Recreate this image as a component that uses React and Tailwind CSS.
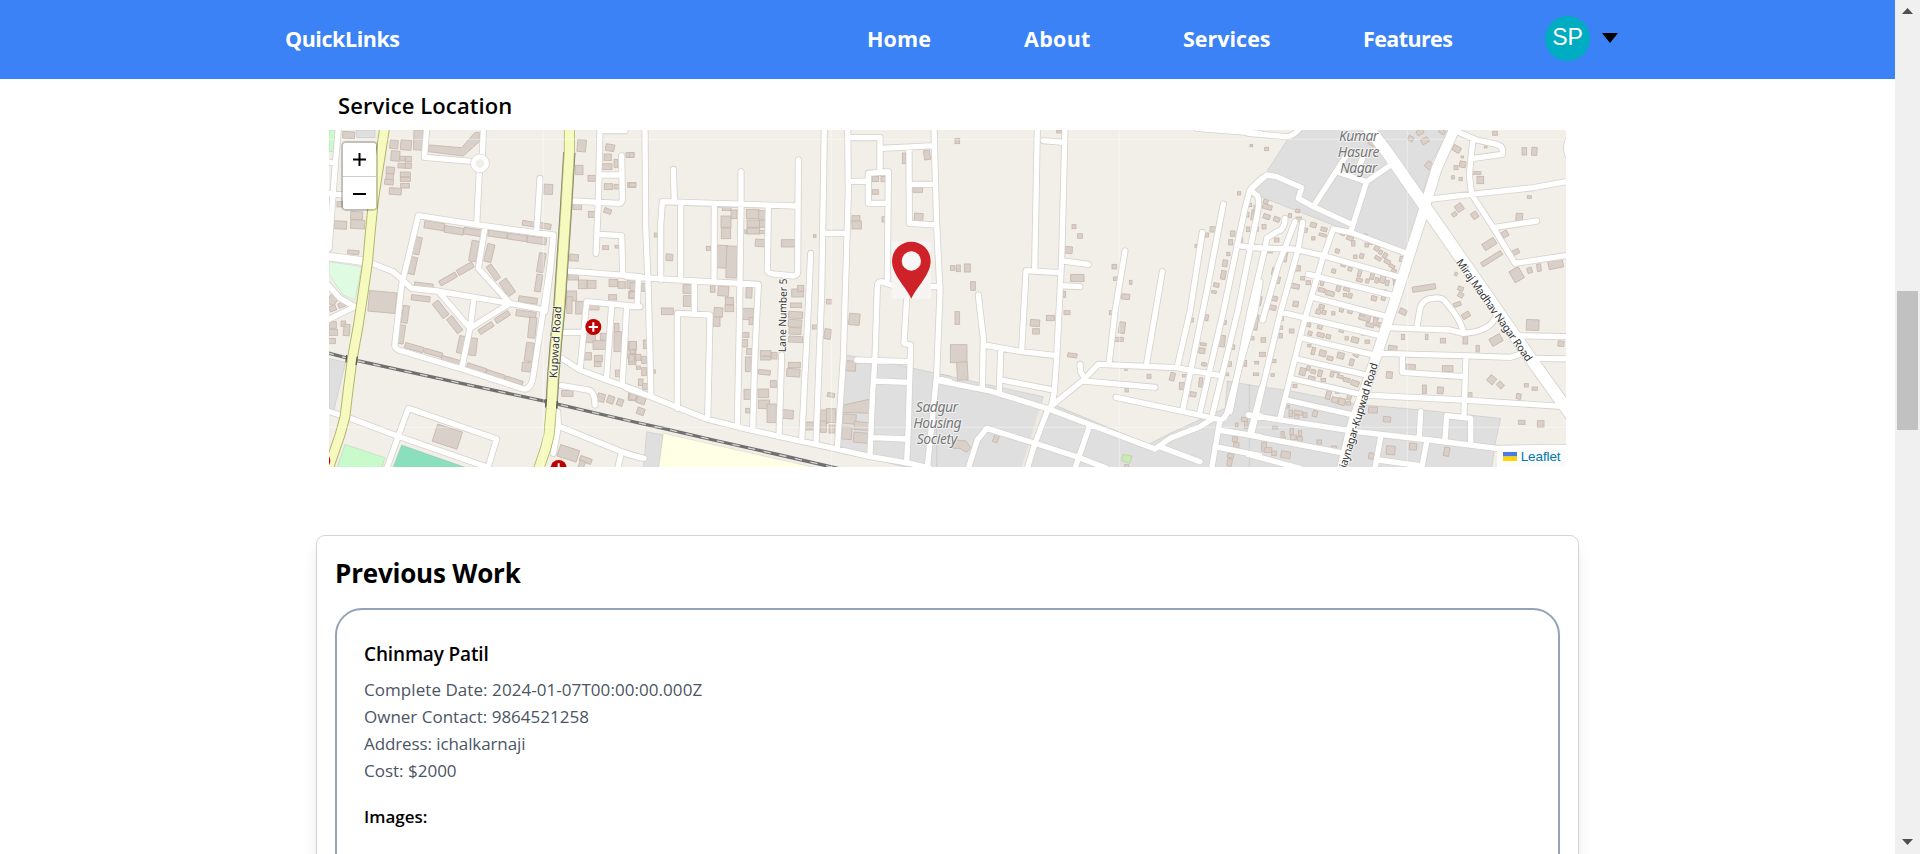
import React from "react";

const parse = (s) => s.trim().split(";").map((r) => r.trim()).filter(Boolean).map((r) => r.split(/[\s,]+/).map(Number));

// Each sector holds its own local coordinates, shifted by dx on the map canvas.
// Building entries: centre x, centre y, width, height, rotation.
const SECTORS = [
  {
    dx: 0,
    areas: [
      ["#c8facc", "27,15 48,15 40,80 27,80"],
      ["#dffce2", "27,410 125,425 105,525 70,510 45,475 27,445"],
      ["#dfdfdf", "108,15 165,15 165,38 110,38"],
      ["#dfdfdf", "27,700 77,712 42,855 27,850"],
      ["#c8facc", "75,958 195,998 185,1030 50,1030"],
      ["#8adfbc", "245,960 445,1030 218,1030"],
    ],
    roads: `M155 415L220 440L275 490L350 498L570 535L660 552 M20 475L60 520L105 545L20 586 M55 10L45 130L27 370 M20 110L45 115 M20 205L70 210
      M320 10L313 97L465 110 M490 10L487 90 M478 140L470 300 M295 272L475 300L700 330L690 425L640 750Q634 795 610 792L420 730L235 675Q222 668 225 655L245 480Z
      M660 160L650 320 M495 305L475 430L570 535L450 610L425 730 M360 505L450 610 M462 520L450 610 M20 857L90 880L230 932L500 1026 M200 1030L265 850L530 942L503 1030
      M840 10L835 230L828 385 M915 17L850 17 M905 92L907 225Q905 235 895 235L758 228 M840 150L905 150 M835 328L905 332L908 445 M742 438L960 455
      M960 545L800 530L780 735 M735 622L790 622 M875 540L860 755 M920 545L907 775 M725 700L780 735L860 765L960 800 M725 782L805 795Q825 800 825 840
      M713 860L715 905L700 985 M720 905L905 980L960 998 M905 980L893 1030 M700 340L692 430L675 560`,
    wide: "M20 394L135 409",
    buildings: `86 30 36 20 3;295 45 28 60 2;222 58 24 26 5;258 60 32 30 5;226 93 26 30 5;245 122 22 14 3;248 101 16 14 3;265 102 18 16 0;265 122 18 16 0;211 136 24 20 5;209 155 22 18 5;207 171 26 16 5;256 148 30 14;256 163 30 12;255 182 26 14;226 199 36 20 4;
      61 300 38 24 3;110 272 36 24 3;113 298 42 26 3;100 382 34 12 5;60 238 18 16;785 62 26 36 5;685 193 26 30 3;778 135 22 28;815 160 22 18;772 245 26 18;815 268 20 18;762 398 26 20 4;865 185 24 18;890 185 16 14;935 180 24 14;930 90 24 14;870 68 26 20 10;863 97 22 20;862 125 28 18;888 115 12 24;863 258 22 14 20;857 368 18 12;891 365 12 8;760 457 32 16;
      343 302 60 22 9;402 316 58 20 9;458 321 54 20 9;533 328 58 18 8;592 337 58 18 8;650 346 58 20 8;625 296 36 14 10;675 303 36 16 10;291 362 22 52 12;278 422 20 52 12;311 482 56 16 7;302 520 56 16 7;462 378 22 62 10;508 384 22 54 14;436 431 52 18 -30;384 462 56 16 -30;520 442 18 50 -35;562 487 26 50 -35;664 413 20 58 9;656 474 18 52 9;624 525 56 18 8;618 567 60 18 8;637 608 22 62 6;362 553 22 54 -38;404 599 20 54 -38;547 576 48 16 -33;498 609 48 16 -33;424 659 20 52 12;459 665 22 52 6;628 681 24 56 8;620 726 28 28 5;256 568 18 52 8;244 628 18 56 8;283 668 58 16 16;341 684 54 14 16;393 706 58 14 16;470 730 60 16 18;527 749 58 14 18;583 767 52 12 18;
      187 531 82 62 5;382 935 78 54 18;38 525 24 30 30;38 600 22 20;40 622 26 18;36 648 20 16;70 596 14 16;80 615 18 34 5;38 550 20 16 -20;65 540 20 14 -20;788 478 26 26;815 478 26 24;755 513 30 30;748 540 16 50;780 548 26 38;822 547 30 16;880 474 26 22;905 480 22 20;878 517 24 16;932 478 22 24;937 510 22 22;850 635 18 20;812 640 28 26;838 660 38 26;890 610 14 30;893 650 22 60;803 694 22 22;835 700 24 18;833 718 20 14;937 660 24 20;935 685 26 28;937 710 22 18;893 745 14 20;742 805 34 18;843 818 22 24 15;872 824 20 22 20;900 832 18 20 20;938 815 26 24 5;745 985 60 36 18;797 1005 36 16 20;785 1020 16 26 20`,
    shapes: ["328,60 425,68 465,22 478,22 478,50 430,93 325,80"],
  },
  {
    dx: 930,
    areas: [
      ["#dfdfdf", "648,690 760,710 920,745 962,753 962,1030 840,1030 620,975 635,850"],
      ["#dfdfdf", "50,920 100,930 90,1030 40,1030"],
      ["#ffffe5", "100,925 600,1038 85,1038"],
    ],
    roads: `M45 10L47 300L55 500L63 815 M-10 790L63 815L145 848L230 882L340 910L450 935L620 972L720 995L840 1015L900 1030
      M92 465L92 300L97 230L500 243 M130 133L133 228 M333 140L333 240L328 600L322 905 M152 235L152 465 M253 238L252 467 M505 105L503 440Q502 453 490 453L430 447Q412 444 412 435L415 245
      M-10 455L195 468L385 478L375 680L368 915 M193 470L193 565 M142 850L142 565L240 570L233 880 M25 462L22 545L-10 545 M455 690L447 935 M542 385L530 650L515 945
      M583 10L575 500L558 955 M653 10L655 200L640 700L622 970 M655 38L750 38L750 140 M755 70L912 62 M655 170L712 168 M775 235L715 235L715 145L775 140L772 465 M720 990L728 800L735 700L742 485Q742 470 755 470L800 485 M585 325L650 325
      M837 70L838 295L920 300 M845 178L915 178 M912 10L920 300L930 500L920 750L892 1030 M900 485L930 485 M830 520L822 655L842 660L835 900L830 1015 M680 705L840 710 M735 768L835 772 M730 938L830 942 M-10 987L42 1000 M920 760L960 770`,
    buildings: `5 90 14 14;8 180 20 12;78 330 10 12;118 397 20 20 5;236 370 14 12;290 250 26 14;312 268 18 26;288 290 30 34;288 325 28 32;276 395 32 68 2;305 411 32 95 2;368 267 38 28;397 270 22 26;370 296 38 22;398 297 20 20;370 318 38 18;345 320 10 10;398 321 20 10;392 354 32 22 3;474 355 40 22;554 333 8 8;172 492 26 26;172 528 24 32;248 492 14 20;280 498 32 30 5;357 503 18 32 3;298 528 24 22;298 550 26 20;265 562 26 28 5;260 590 20 28;112 559 36 20;353 567 34 34;363 588 12 22;503 504 36 24;512 490 18 18;498 541 34 14;497 570 42 20 3;495 595 40 22 3;495 618 36 20 3;497 643 42 18 3;597 530 16 14;593 627 20 30 10;555 606 16 12;673 583 32 34 5;347 630 20 14;345 655 16 22;358 680 16 18;355 718 18 44;407 685 32 16;407 700 30 10;433 692 16 20;403 742 36 14 6;493 720 36 16;490 743 40 24 4;430 777 18 20;352 808 20 30;400 805 32 26;402 838 34 26;425 865 28 56;473 868 34 26 5;353 857 12 14;603 810 22 12 10;538 903 24 24;582 875 22 40;603 872 28 42;580 905 18 34;606 912 18 24;658 882 40 28 5;694 903 42 24 5;650 925 30 36 5;692 938 42 30 5;662 723 30 30 4;736 162 20 16;760 162 14 16;736 201 18 14;678 282 24 20;680 300 28 24;762 283 12 16;822 100 10 32;891 90 18 28 -8;863 195 30 14;866 276 26 22 4;8 485 16 24;6 510 16 18;40 487 12 24;8 662 22 26;25 697 16 18;5 700 16 22;8 680 14 12;45 658 10 26;42 705 14 22;25 728 12 10;42 740 14 24;73 740 6 10;32 772 14 20;45 785 14 18;8 815 20 18 20;33 826 26 20 20;32 859 22 20 20`,
    shapes: ["640,840 718,823 718,865 638,862"],
  },
  {
    dx: 1860,
    areas: [
      ["#dfdfdf", "-10,745 310,815 300,850 325,850 340,835 345,840 625,958 700,920 855,850 862,768 932,780 932,1030 -10,1030"],
      ["#c8ebb0", "548,988 576,993 570,1015 545,1008"],
    ],
    roads: `M-10 766L150 798L320 850L645 972L690 940L780 905L820 880 M292 10L284 435 M310 47L370 52 M375 10L365 400L350 700L343 800L335 840 M360 443L258 437L245 675 M370 408L445 418 M362 482L420 485
      M115 510L130 640L127 790 M133 660L245 680L350 692 M182 680L178 805 M185 765L340 795 M555 378L525 560L507 715 M667 440L620 715 M840 752L710 728L475 718L430 765L325 850 M420 718L422 740L435 762 M430 768L645 787 M528 817L730 860L845 885
      M787 322L750 560L712 725 M850 237L800 500L728 855 M965 160L930 195L915 250L850 560L780 860 M930 195L952 212Q962 230 945 300L893 560L818 865 M960 470L945 560L900 720L865 850Q858 882 840 885L815 1030 M890 362L960 368
      M500 1030L410 995L285 955L140 910L112 945L85 1030 M325 850L285 955L262 1030 M448 905L405 1030 M660 965L780 1010 M835 915L960 935 M825 965L960 992 M965 790L930 925 M945 868L960 872 M770 10L960 25`,
    buildings: `52 48 14 16;357 20 14 8;402 305 12 12;420 333 14 14;386 375 22 20 4;412 459 40 22;373 508 8 18;38 429 14 14;55 430 12 20;82 429 18 24;99 483 14 26;52 579 14 38;56 686 50 54;67 738 32 54 -3;285 594 28 20 4;288 619 20 16;331 579 24 16;381 563 18 12;397 691 28 12 8;523 425 14 14;526 461 12 10;572 472 8 12;557 515 24 16 5;513 563 10 12;546 608 18 34 8;537 643 26 12;897 205 10 10;934 62 6 6;818 313 16 16;801 330 10 12;768 363 6 10;878 326 14 16;872 352 12 16;865 387 10 10;855 415 14 20 10;850 450 14 26 10;829 480 16 12 10;822 501 14 8 10;930 240 10 10;921 269 12 14;939 270 10 30 8;924 313 10 14;903 345 10 14;755 585 10 12;800 578 10 18 8;852 592 14 12 8;845 648 20 34 8;790 658 18 8 8;786 677 18 16 8;877 666 14 14 8;792 718 14 10 8;868 717 12 14;916 715 8 18;558 733 8 6;627 754 12 12;697 755 14 24 14;733 752 12 8;726 783 16 20;782 772 10 28 8;860 748 12 8;759 808 18 14 8;560 795 10 12;168 940 14 24 20;913 883 18 12;919 900 10 20;890 900 8 12;885 942 14 16 10;889 960 16 14;872 992 18 12 10;869 1012 14 22 10;560 1023 12 8`,
    shapes: ["35,955 50,945 78,948 92,968 80,982 60,970 40,970"],
  },
  {
    dx: 2790,
    areas: [
      ["#dfdfdf", "115,40 150,10 600,10 545,110 515,220 470,385 300,320 30,215 5,190 50,140"],
      ["#dfdfdf", "-2,780 120,797 325,838 520,855 752,880 735,960 725,1030 -2,1030"],
    ],
    roads: `M-5 25L110 35Q128 35 150 10 M5 190L50 150L80 155L155 188L145 220L190 245L305 298 M290 90L190 245 M260 140L350 170 M425 118L350 170L303 318 M340 95L325 130
      M90 880L165 580L215 410L250 312L300 322L475 387 M-5 368L130 372L220 392L450 457 M175 448L430 512 M190 517L410 575 M95 562L390 632 M160 640L380 692 M145 703L350 750 M130 762L340 810L640 825L948 845 M110 825L310 870 M-5 870L320 920L540 945L740 970L960 967
      M-5 930L285 985 M-5 988L150 1030 M105 280Q105 315 80 320L50 340L45 370L0 560L-60 860 M135 290L85 420L38 585 M158 292L145 370L92 560L5 925
      M615 17L680 45L740 58Q762 64 757 88L670 100 M668 50L658 150L665 208L730 308L795 415L960 390 M545 222L665 208L850 188L960 168 M730 308L860 288 M415 608L600 615L640 625Q715 620 735 580 M500 610L510 550Q520 520 550 520Q578 514 590 535Q630 580 640 620
      M385 685L640 692L780 697L820 685 M790 632L960 635 M850 700L960 702 M457 690L457 742L645 755 M648 695L642 870 M585 945L590 872L662 880L662 960 M512 860L508 935 M393 930L375 1030 M530 950L515 1030 M385 1005L510 1022 M955 45Q945 70 955 95`,
    wide: "M615 8L560 130L525 245L480 385L440 510L400 630L350 780L310 890L275 1035",
    major: "M355 8L410 80L525 245L640 410L845 705L970 880",
    buildings: `4 62 8 6;50 72 12 10;482 41 16 14 30;525 47 22 16 -30;537 121 20 20 40;510 22 20 14 -30;576 20 18 12 30;365 55 20 12 30;735 25 14 12;823 79 14 22;853 79 16 24 4;707 66 8 6;620 72 24 18 30;637 96 8 6;638 118 18 18 10;618 128 12 12;609 157 8 10;632 162 10 10;680 144 26 8;691 165 20 22;838 216 12 8;628 248 22 22 -35;613 268 14 12 -35;674 271 18 20 -35;808 276 20 22 5;765 327 18 18 -30;718 357 40 22 -32;725 401 70 14 -32;795 382 26 14 -25;800 449 32 38 -30;839 436 14 16 -15;867 428 12 22 -8;917 418 44 24 -12;618 447 8 10 30;522 489 70 16 -9;632 491 16 12 20;632 510 16 14 30;622 538 22 12 -20;648 571 24 16 -30;459 560 22 16 25;848 600 38 32 2;738 645 36 24 -30;933 656 18 16 5;459 636 10 16;530 636 8 16;579 647 16 14;646 645 14 24;683 671 10 20;428 669 26 14 8;418 750 18 20 5;482 726 28 16 4;593 731 32 18;725 764 22 22 40;751 780 20 16 45;829 781 12 10;854 791 16 10;806 814 14 16 10;523 793 12 26;571 796 18 20 5;660 810 12 14;369 855 26 18;411 883 22 16 5;815 892 20 12;872 897 20 20;422 976 26 26 5;489 965 22 20 5;364 993 16 18 10;590 980 16 26 10;
      47 230 14 12 20;52 246 28 14 15;20 248 16 14;18 270 12 18;50 275 20 14 20;80 283 18 14 20;15 312 20 14;42 305 12 14;143 258 12 10 10;120 272 10 12;146 283 16 14;163 315 18 14 15;190 300 18 14 15;222 313 18 12 15;218 330 22 8 15;190 340 10 10;278 325 14 12 20;300 340 20 12 20;310 355 10 16;346 334 10 14 20;350 360 10 12;362 353 12 10;262 378 12 12 15;316 395 10 10;335 393 12 14 15;380 370 14 14 30;392 382 10 12 30;384 400 20 10 30;405 392 12 16 30;412 410 18 12 30;426 424 16 10 30;432 437 14 10 30;454 402 10 16 15;60 378 14 12;103 395 16 30 10;80 345 14 12;75 440 18 22 12;82 465 16 20 12;70 520 24 14 12;68 548 20 14 12;28 528 12 28 12;16 592 16 46 8;140 393 12 14;142 430 18 16;158 460 12 10;132 483 32 14 12;175 473 14 12;137 537 16 16 10;92 608 12 10;125 618 14 12;95 580 10 14;92 632 10 14;40 645 14 14;37 688 18 12;7 640 10 10;20 713 12 8;72 708 12 10;18 748 16 8;68 750 10 8;135 783 12 10;
      251 438 12 12 15;280 420 14 10 15;300 432 12 12 15;330 440 10 30 15;328 465 18 10 15;352 468 10 12 15;366 455 12 16 15;380 466 10 16 15;398 462 16 24 15;412 474 10 16 15;434 460 10 10;436 474 12 14;217 472 10 20 15;215 495 20 12 15;240 505 26 14 15;265 490 12 18 15;290 493 18 10 15;285 510 10 10;300 512 12 14 15;403 500 14 10;372 520 16 14 15;400 520 12 12 15;215 545 16 12 15;205 560 14 14 15;222 562 12 12 15;250 565 10 10;275 552 12 18 15;300 560 14 10 15;345 575 34 24 15;340 560 14 24 15;380 572 14 24 15;376 590 12 24 15;360 600 24 12 15;390 600 12 14 15;
      175 600 14 10 15;180 625 12 12 15;210 605 14 14 15;212 630 22 12 15;235 635 14 12 15;275 615 14 14 15;290 640 10 10;315 645 22 16 15;340 625 12 10;352 650 14 10;178 662 10 8;190 678 10 22 15;218 685 20 18 15;240 700 18 12 15;272 692 20 18 15;305 712 12 20 15;318 690 16 10 30;345 680 12 10;158 740 18 22 15;175 730 10 14 15;190 740 14 12 15;185 760 20 12 15;210 745 12 20 15;220 765 14 10;246 748 10 16 15;262 738 16 12 15;270 755 18 10 15;290 765 20 12 15;315 775 24 16 20;235 810 14 26 15;255 825 20 16 15;275 830 20 20 15;298 815 12 20 15;262 800 10 10;295 835 14 10;
      112 845 12 8;122 865 10 20;145 863 26 12 10;140 877 14 12;165 870 12 14;195 866 14 18 15;75 908 14 8;98 925 10 10;98 942 16 12;125 920 10 20;130 937 18 14;150 925 10 16;150 942 14 14;208 951 14 12;252 968 16 10;42 965 14 26;55 975 22 14;72 985 14 14;107 989 28 20 8`,
    shapes: [],
  },
].map((s) => ({ ...s, buildings: parse(s.buildings) }));

const Each = ({ render }) => SECTORS.map((s) => <g key={s.dx} transform={`translate(${s.dx} 0)`}>{render(s)}</g>);

const YELLOW_WEST = "M194 8L175 130L160 230L150 330L143 410L130 500L115 600L97 700L85 790L75 875L60 930L22 1040";
const YELLOW_EAST = "M748 8L748 80L738 250L728 400L718 550L708 650L700 750L694 850L687 930L677 970L655 1035";
const RAIL = "M20 683L115 708L400 770L680 830L930 888L1030 910L1180 945L1380 990L1570 1034";

function Hospital({ x, y }) {
  return (
    <g transform={`translate(${x} ${y})`}>
      <circle r="24" fill="#bf0000" />
      <path d="M-14 0H14M0 -14V14" stroke="#fff" strokeWidth="6" />
    </g>
  );
}

const halo = { paintOrder: "stroke", stroke: "#ffffff", strokeOpacity: 0.6, strokeWidth: 6, strokeLinejoin: "round" };

function MapCanvas() {
  return (
    <svg className="block h-full w-full" viewBox="27 15 3711 1011" preserveAspectRatio="none" fill="none" fontFamily="'Noto Sans', sans-serif">
      <rect x="0" y="0" width="3760" height="1040" fill="#f2efe9" />
      <Each render={(s) => s.areas.map(([c, p]) => <polygon key={p} points={p} fill={c} stroke="#000" strokeOpacity="0.12" strokeWidth="2" />)} />
      <path d="M2170 835L2110 1030" stroke="#efe9df" strokeWidth="12" />
      <g fill="#d9d0c9" stroke="#c8b6ab" strokeWidth="2.5">
        <Each
          render={(s) => (
            <>
              {s.buildings.map(([x, y, w, h, r = 0], i) => (
                <rect key={i} x={x - w / 2} y={y - h / 2} width={w} height={h} transform={`rotate(${r} ${x} ${y})`} />
              ))}
              {s.shapes.map((p) => <polygon key={p} points={p} />)}
            </>
          )}
        />
      </g>
      <path d={RAIL} stroke="#707070" strokeWidth="10" />
      <path d={RAIL} stroke="#d8d5d0" strokeWidth="4" strokeDasharray="22 26" />
      <g strokeLinecap="round" strokeLinejoin="round" stroke="#d6d3ce">
        <Each render={(s) => <><path d={s.roads} strokeWidth="21" />{s.wide && <path d={s.wide} strokeWidth={s.dx ? 35 : 27} />}{s.major && <path d={s.major} strokeWidth="40" />}</>} />
      </g>
      <g strokeLinecap="round" strokeLinejoin="round" stroke="#ffffff">
        <Each render={(s) => <><path d={s.roads} strokeWidth="16" />{s.wide && <path d={s.wide} strokeWidth={s.dx ? 30 : 23} />}{s.major && <path d={s.major} strokeWidth="35" />}</>} />
      </g>
      <circle cx="480" cy="115" r="20" fill="#f2efe9" stroke="#d6d3ce" strokeWidth="18" />
      <circle cx="480" cy="115" r="20" fill="#f2efe9" stroke="#fff" strokeWidth="14" />
      <path d="M748 82L738 250L728 400L718 550L708 650L700 750L694 850" stroke="#7c7c70" strokeWidth="37" />
      <g strokeLinejoin="round">
        <path d={YELLOW_WEST} stroke="#b3b56c" strokeWidth="32" />
        <path d={YELLOW_WEST} stroke="#f7fabf" strokeWidth="26" />
        <path d={YELLOW_EAST} stroke="#b3b56c" strokeWidth="33" />
        <path d={YELLOW_EAST} stroke="#f7fabf" strokeWidth="28" />
      </g>
      <path d="M80 690L78 712M112 695L108 720M679 822L677 845M712 828L710 850" stroke="#555" strokeWidth="4" />
      <path d="M670 0V1030M1535 0V1030M2398 0V1030M3262 0V1030M0 43H3760M0 907H3760" stroke="#fff" strokeOpacity="0.4" strokeWidth="3" />
      <Hospital x={820} y={606} />
      <Hospital x={716} y={1029} />
      <Hospital x={7} y={1007} />
      <g fill="#333333" fontSize="33" style={halo}>
        <text transform="translate(711 760) rotate(-86.5)" textLength="216">Kupwad Road</text>
        <text transform="translate(1397 682) rotate(-89)" fontSize="31" textLength="221">Lane Number 5</text>
        <text transform="translate(3407 412) rotate(54.6)" fontSize="32" textLength="368">Miraj Madhav Nagar Road</text>
        <text transform="translate(3174 718) rotate(-73)" fontSize="32" textAnchor="end" textLength="352">Vijaynagar-Kupwad Road</text>
      </g>
      <g fill="#777777" fontSize="42" fontStyle="italic" textAnchor="middle" style={halo}>
        <text x="1851" y="861" textLength="127">Sadgur</text>
        <text x="1852" y="909" textLength="145">Housing</text>
        <text x="1851" y="957" textLength="122">Society</text>
        <text x="3116" y="47" textLength="118">Kumar</text>
        <text x="3116" y="95" textLength="125">Hasure</text>
        <text x="3116" y="143" textLength="112">Nagar</text>
      </g>
      <rect x="1715" y="350" width="118" height="171" fill="#f6f5f4" fillOpacity="0.93" />
      <path d="M1774 521C1758 485 1716 450 1716 408A58 58 0 0 1 1832 408C1832 450 1790 485 1774 521Z" fill="#cf2228" />
      <circle cx="1774" cy="408" r="29" fill="#f8f7f7" />
    </svg>
  );
}

function ServiceMap() {
  return (
    <div className="relative h-[337px] w-[1237px] overflow-hidden">
      <MapCanvas />
      <div className="absolute top-[11px] left-[12px] w-[37px] rounded-[5px] border-2 border-black/20 bg-clip-padding">
        <div className="flex h-[34px] items-center justify-center rounded-t-[3px] border-b border-[#cccccc] bg-white">
          <svg className="h-[13px] w-[13px]" viewBox="0 0 13 13"><path d="M0 6.5H13M6.5 0V13" stroke="#000" strokeWidth="2" /></svg>
        </div>
        <div className="flex h-[32px] items-center justify-center rounded-b-[3px] bg-white">
          <svg className="h-[13px] w-[13px]" viewBox="0 0 13 13"><path d="M0 7H13" stroke="#000" strokeWidth="2" /></svg>
        </div>
      </div>
      <div className="absolute right-0 bottom-0 flex h-[20px] items-center gap-[4px] bg-white/80 px-[5.5px] pb-px font-['Liberation_Sans',Arial,sans-serif] text-[13.5px] leading-none tracking-[-0.1px] text-[#0078a8]">
        <svg className="h-[9px] w-[14px]" viewBox="0 0 14 9"><path fill="#4c7be1" d="M0 0h14v4.5H0z" /><path fill="#ffd500" d="M0 4.5h14V9H0z" /></svg>
        <span>Leaflet</span>
      </div>
    </div>
  );
}

function Navbar() {
  return (
    <nav className="flex h-[79px] shrink-0 items-center bg-[#3b82f6] pl-[285px] text-[21.5px] font-bold text-white">
      <span className="w-[582px] tracking-[-0.45px]">QuickLinks</span>
      <span className="w-[157px] tracking-[0.15px]">Home</span>
      <span className="w-[159px] tracking-[0.3px]">About</span>
      <span className="w-[180px]">Services</span>
      <span className="w-[182px] tracking-[-0.6px]">Features</span>
      <span className="mb-[2px] flex h-[45px] w-[45px] items-center justify-center rounded-full bg-[#00acc1] pb-[2px] font-['Liberation_Sans',Arial,sans-serif] text-[23px] font-normal">SP</span>
      <svg className="mb-[3px] ml-[12px] h-[10px] w-[16px]" viewBox="0 0 16 10"><path d="M0 0H16L8 10Z" fill="#000" /></svg>
    </nav>
  );
}

function Scrollbar() {
  return (
    <div className="flex h-full w-[25px] shrink-0 flex-col items-center bg-[#f0f0f0]">
      <svg className="mt-[8px] h-[6px] w-[11px]" viewBox="0 0 11 6"><path d="M5.5 0L11 6H0Z" fill="#505050" /></svg>
      <div className="mt-[277px] h-[139px] w-[21px] bg-[#c1c1c1]" />
      <svg className="mt-auto mb-[9px] h-[6px] w-[11px]" viewBox="0 0 11 6"><path d="M0 0H11L5.5 6Z" fill="#505050" /></svg>
    </div>
  );
}

export default function App() {
  return (
    <div className="flex h-[854px] w-full overflow-hidden bg-white font-['Open_Sans','Noto_Sans',sans-serif] text-black">
      <div className="flex min-w-0 flex-1 flex-col overflow-hidden">
        <Navbar />
        <section className="pl-[329px]">
          <h2 className="h-[51px] pl-[9px] text-[22px] leading-[53px] font-semibold tracking-[0.1px]">Service Location</h2>
          <ServiceMap />
        </section>
        <section className="mt-[68px] ml-[316px] h-[520px] w-[1263px] shrink-0 rounded-[9px] border border-[#d1d5db] px-[18px] shadow-[0_11px_17px_-3px_rgba(0,0,0,0.1),0_4px_7px_-4px_rgba(0,0,0,0.1)]">
          <h2 className="h-[72px] text-[26px] leading-[75px] font-bold tracking-[-0.2px]">Previous Work</h2>
          <article className="h-[460px] rounded-[27px] border-2 border-[#94a3b8] px-[27px] pt-[28px]">
            <h3 className="text-[19px] leading-[32px] font-semibold tracking-[-0.15px]">Chinmay Patil</h3>
            <div className="mt-[6px] text-[17px] leading-[27px] text-[#4b5563]">
              <p className="tracking-[0.06px]">Complete Date: 2024-01-07T00:00:00.000Z</p>
              <p>Owner Contact: 9864521258</p>
              <p className="tracking-[-0.1px]">Address: ichalkarnaji</p>
              <p>Cost: $2000</p>
            </div>
            <h4 className="mt-[19px] text-[17px] leading-[27px] font-semibold">Images:</h4>
          </article>
        </section>
      </div>
      <Scrollbar />
    </div>
  );
}
